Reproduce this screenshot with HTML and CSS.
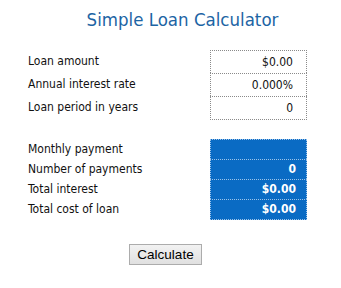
FILE: index.html
```html
<!DOCTYPE html>
<html>
<head>
<meta charset="utf-8">
<link rel="stylesheet" href="styles.css">
</head>
<body>
<div class="calc">
  <h1 class="title">Simple Loan Calculator</h1>
  <div class="grid inputs">
    <div class="label">Loan amount</div><div class="cell">$0.00</div>
    <div class="label">Annual interest rate</div><div class="cell">0.000%</div>
    <div class="label">Loan period in years</div><div class="cell last">0</div>
  </div>
  <div class="grid outputs">
    <div class="label">Monthly payment</div><div class="cell"></div>
    <div class="label">Number of payments</div><div class="cell">0</div>
    <div class="label">Total interest</div><div class="cell">$0.00</div>
    <div class="label">Total cost of loan</div><div class="cell last">$0.00</div>
  </div>
  <div class="actions">
    <button class="btn" type="button">Calculate</button>
  </div>
</div>
</body>
</html>
```
FILE: styles.css
```css
html, body {
  margin: 0;
  padding: 0;
  background: #ffffff;
}
.calc {
  width: 341px;
  font-family: "DejaVu Sans Condensed", "DejaVu Sans", Tahoma, sans-serif;
  font-size: 12px;
  color: #111;
}
.title {
  margin: 0;
  padding: 9px 0 0 24px;
  height: 41px;
  box-sizing: border-box;
  text-align: center;
  font-size: 18.5px;
  font-weight: normal;
  color: #1c64a4;
  line-height: 22px;
}
.grid {
  display: grid;
  grid-template-columns: 182px 97px;
  margin-left: 28px;
}
.inputs {
  margin-top: 9px;
}
.inputs .cell {
  height: 23px;
  border: 1px dotted #8a8a8a;
  border-bottom: none;
  box-sizing: border-box;
  text-align: right;
  padding-right: 13px;
  line-height: 22px;
}
.inputs .cell.last {
  height: 24px;
  border-bottom: 1px dotted #8a8a8a;
}
.inputs .label {
  line-height: 23px;
}
.outputs {
  margin-top: 19px;
}
.outputs .label {
  line-height: 20px;
}
.outputs .cell {
  height: 20px;
  background: #0a6bc4;
  border: 1px dotted #9cc3ea;
  border-bottom: none;
  box-sizing: border-box;
  text-align: right;
  padding-right: 10px;
  line-height: 19px;
  color: #ffffff;
  font-weight: bold;
}
.outputs .cell.last {
  height: 21px;
  border-bottom: 1px dotted #9cc3ea;
}
.actions {
  margin-top: 24px;
  padding-left: 129px;
}
.btn {
  width: 73px;
  height: 21px;
  padding: 0;
  margin: 0;
  font-family: "Liberation Sans", Arial, sans-serif;
  font-size: 13.5px;
  color: #000;
  background: linear-gradient(#f2f2f2, #e0e0e0);
  border: 1px solid #acacac;
  border-radius: 0;
}
```
